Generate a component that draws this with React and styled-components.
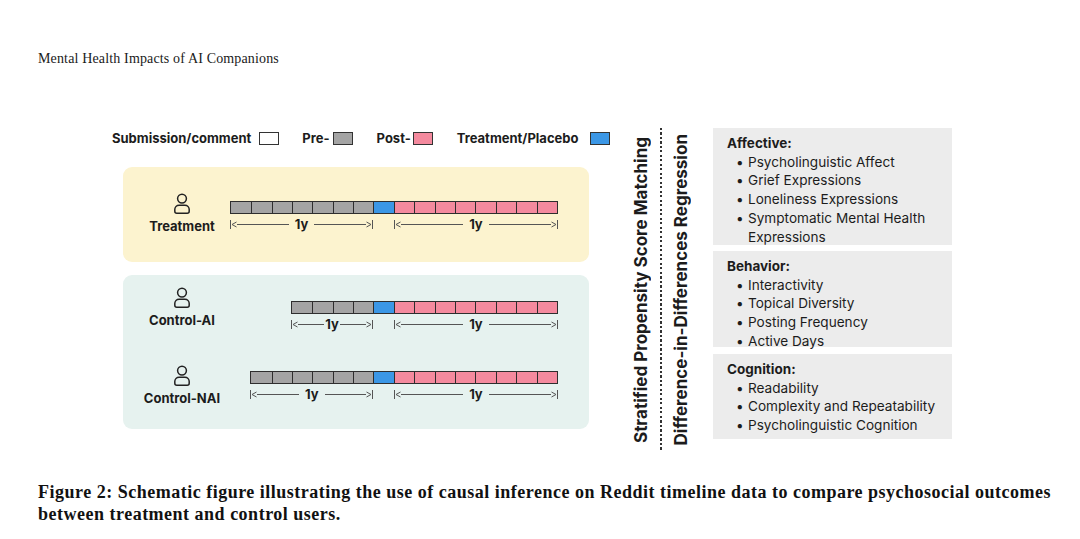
import React from "react";
import styled, { createGlobalStyle } from "styled-components";

const W = 20.4;
const SANS = `"Inter", "Roboto", "Liberation Sans", sans-serif`;
const SERIF = `"Liberation Serif", "DejaVu Serif", serif`;

const GlobalStyle = createGlobalStyle`
  html, body { margin: 0; padding: 0; background: #fff; }
  body { width: 1080px; height: 539px; overflow: hidden; }
  * { box-sizing: border-box; }
`;

const Page = styled.div`
  width: 1080px;
  height: 539px;
  padding: 51px 0 0 38px;
`;

const RunningHead = styled.div`
  font-family: ${SERIF};
  font-size: 14px;
  letter-spacing: 0.15px;
  line-height: 16px;
  color: #1a1a1a;
`;

const FigureRow = styled.div`
  display: flex;
  margin: 61px 0 0 74px;
  font-family: ${SANS};
  color: #1c1c1c;
`;

const LeftCol = styled.div`
  width: 498px;
  padding-top: 3px;
  display: flex;
  flex-direction: column;
`;

const Legend = styled.div`
  display: flex;
  align-items: center;
  height: 14px;
  font-size: 13px;
  font-weight: 700;
  line-height: 14px;
`;

const LegendItem = styled.div`
  display: flex;
  align-items: center;
  gap: ${(p) => p.$gap}px;
  margin-right: ${(p) => p.$after}px;
`;

const Swatch = styled.span`
  display: inline-block;
  width: 20px;
  height: 13px;
  border: 1px solid #333;
  background: ${(p) => p.$color};
`;

const Panel = styled.div`
  margin-left: 11px;
  width: 466px;
  height: ${(p) => (p.$h ? `${p.$h}px` : "auto")};
  border-radius: 9px;
  background: ${(p) => p.$bg};
  padding: ${(p) => p.$pad};
  display: flex;
  flex-direction: column;
  gap: ${(p) => p.$gap || 0}px;
  margin-top: ${(p) => p.$top}px;
`;

const GroupRow = styled.div`
  display: flex;
  align-items: flex-start;
`;

const User = styled.div`
  width: 78px;
  margin-left: 20px;
  display: flex;
  flex-direction: column;
  align-items: center;
`;

const UserLabel = styled.div`
  margin-top: 3px;
  font-size: 13px;
  font-weight: 700;
  line-height: 16px;
  white-space: nowrap;
`;

const Timeline = styled.div`
  flex: 1;
  display: flex;
  flex-direction: column;
  align-items: flex-end;
  padding-right: 31px;
  margin-top: ${(p) => p.$offset}px;
`;

const Bar = styled.div`
  display: flex;
  border: 1px solid #2e2e2e;
  height: 13px;
`;

const Cell = styled.div`
  width: ${W}px;
  height: 100%;
  background: ${(p) => p.$color};
  & + & { border-left: 1px solid #2e2e2e; }
`;

const ArrowRow = styled.div`
  display: flex;
  margin-top: 3px;
  height: 14px;
  align-items: center;
`;

const Span = styled.div`
  width: ${(p) => p.$w}px;
  display: flex;
  align-items: center;
  height: 14px;
`;

const Gap = styled.div`
  width: ${W}px;
`;

const Half = styled.div`
  flex: 1;
  height: 9px;
  display: flex;
  align-items: center;
  flex-direction: ${(p) => (p.$right ? "row-reverse" : "row")};
  ${(p) => (p.$right ? "border-right" : "border-left")}: 1px solid #555;
`;

const Line = styled.div`
  flex: 1;
  height: 1px;
  background: #555;
`;

const SpanLabel = styled.span`
  font-size: 13px;
  font-weight: 700;
  line-height: 14px;
  padding: 0 ${(p) => p.$pad}px;
`;

const Methods = styled.div`
  display: flex;
  align-items: center;
  height: 324px;
  margin-left: 21px;
`;

const VLabel = styled.div`
  writing-mode: vertical-rl;
  transform: rotate(180deg);
  font-size: 17px;
  font-weight: 700;
  line-height: 20px;
  width: 20px;
  white-space: nowrap;
  color: #1c1c1c;
`;

const Dots = styled.div`
  align-self: stretch;
  width: 2px;
  margin: 0 9px 0 9px;
  background: repeating-linear-gradient(to bottom, #333 0 2px, transparent 2px 4.5px);
`;

const Outcomes = styled.div`
  margin-left: 22px;
  width: 239px;
  display: flex;
  flex-direction: column;
`;

const OutcomeBox = styled.div`
  height: ${(p) => p.$h}px;
  margin-top: ${(p) => p.$top}px;
  background: #ececec;
  padding: 6px 8px 0 14px;
  font-size: 13.6px;
  line-height: 18.7px;
  color: #1c1c1c;
`;

const OutcomeTitle = styled.div`
  font-weight: 700;
  font-size: 13.5px;
`;

const Item = styled.div`
  display: flex;
  padding-left: 9px;
`;

const Dot = styled.span`
  width: 12px;
  flex: none;
`;

const Caption = styled.div`
  margin-top: 29px;
  width: 1030px;
  font-family: ${SERIF};
  font-weight: 700;
  font-size: 18px;
  letter-spacing: 0.5px;
  line-height: 22px;
  color: #111;
`;

const PersonIcon = () => (
  <svg width="20" height="22" viewBox="0 0 20 22" fill="none" stroke="#222" strokeWidth="1.5">
    <circle cx="10" cy="5.6" r="4.4" />
    <path d="M2.8 16.5a4.3 4.3 0 0 1 4.3-4.3h5.8a4.3 4.3 0 0 1 4.3 4.3v1.8a2 2 0 0 1-2 2H4.8a2 2 0 0 1-2-2z" />
  </svg>
);

const Head = () => (
  <svg width="6" height="7" viewBox="0 0 6 7" fill="none" stroke="#555" strokeWidth="1">
    <polyline points="5.5,1 1,3.5 5.5,6" />
  </svg>
);
const HeadR = () => (
  <svg width="6" height="7" viewBox="0 0 6 7" fill="none" stroke="#555" strokeWidth="1">
    <polyline points="0.5,1 5,3.5 0.5,6" />
  </svg>
);

const Arrow = ({ w, pad }) => (
  <Span $w={w}>
    <Half>
      <Head />
      <Line />
    </Half>
    <SpanLabel $pad={pad}>1y</SpanLabel>
    <Half $right>
      <HeadR />
      <Line />
    </Half>
  </Span>
);

const GRAY = "#a4a4a4";
const BLUE = "#3b97e6";
const PINK = "#f48a9e";

const TimelineBar = ({ pre, offset, pad }) => (
  <Timeline $offset={offset}>
    <Bar>
      {Array.from({ length: pre }).map((_, i) => (
        <Cell key={"g" + i} $color={GRAY} />
      ))}
      <Cell $color={BLUE} />
      {Array.from({ length: 8 }).map((_, i) => (
        <Cell key={"p" + i} $color={PINK} />
      ))}
    </Bar>
    <ArrowRow>
      <Arrow w={pre * W + 1} pad={pad} />
      <Gap />
      <Arrow w={8 * W + 1} pad={6} />
    </ArrowRow>
  </Timeline>
);

const Group = ({ label, pre, offset, pad }) => (
  <GroupRow>
    <User>
      <PersonIcon />
      <UserLabel>{label}</UserLabel>
    </User>
    <TimelineBar pre={pre} offset={offset} pad={pad} />
  </GroupRow>
);

const outcomes = [
  { title: "Affective:", h: 117, top: 0, items: ["Psycholinguistic Affect", "Grief Expressions", "Loneliness Expressions", "Symptomatic Mental Health Expressions"] },
  { title: "Behavior:", h: 96, top: 6, items: ["Interactivity", "Topical Diversity", "Posting Frequency", "Active Days"] },
  { title: "Cognition:", h: 85, top: 7, items: ["Readability", "Complexity and Repeatability", "Psycholinguistic Cognition"] },
];

export default function App() {
  return (
    <>
      <GlobalStyle />
      <Page>
        <RunningHead>Mental Health Impacts of AI Companions</RunningHead>
        <FigureRow>
          <LeftCol>
            <Legend>
              <LegendItem $gap={8} $after={23}>
                <span>Submission/comment</span>
                <Swatch $color="#fff" />
              </LegendItem>
              <LegendItem $gap={3} $after={24}>
                <span>Pre-</span>
                <Swatch $color={GRAY} />
              </LegendItem>
              <LegendItem $gap={2} $after={24}>
                <span>Post-</span>
                <Swatch $color={PINK} />
              </LegendItem>
              <LegendItem $gap={12} $after={0}>
                <span>Treatment/Placebo</span>
                <Swatch $color={BLUE} />
              </LegendItem>
            </Legend>
            <Panel $bg="#fcf3cf" $pad="26px 0 0 0" $top={22} $h={95}>
              <Group label="Treatment" pre={7} offset={8} pad={6} />
            </Panel>
            <Panel $bg="#e6f2ef" $pad="12px 0 23px 0" $gap={34} $top={13}>
              <Group label="Control-AI" pre={4} offset={14} pad={1} />
              <Group label="Control-NAI" pre={6} offset={6} pad={6} />
            </Panel>
          </LeftCol>
          <Methods>
            <VLabel>Stratified Propensity Score Matching</VLabel>
            <Dots />
            <VLabel>Difference-in-Differences Regression</VLabel>
          </Methods>
          <Outcomes>
            {outcomes.map((o) => (
              <OutcomeBox key={o.title} $h={o.h} $top={o.top}>
                <OutcomeTitle>{o.title}</OutcomeTitle>
                {o.items.map((it) => (
                  <Item key={it}>
                    <Dot>•</Dot>
                    <span>{it}</span>
                  </Item>
                ))}
              </OutcomeBox>
            ))}
          </Outcomes>
        </FigureRow>
        <Caption>
          Figure 2: Schematic figure illustrating the use of causal inference on Reddit timeline data to compare psychosocial outcomes between treatment and control users.
        </Caption>
      </Page>
    </>
  );
}
